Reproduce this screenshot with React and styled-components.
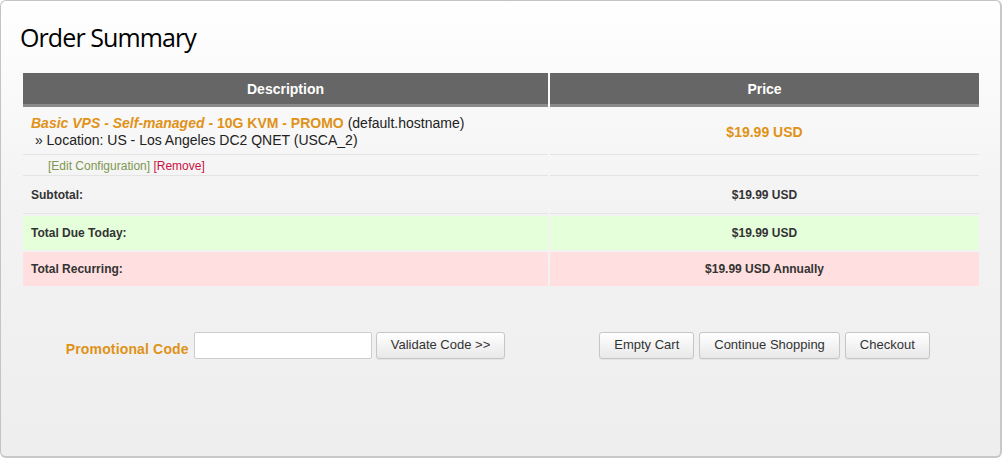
import React from 'react';
import styled, { createGlobalStyle } from 'styled-components';

const GlobalStyle = createGlobalStyle`
    html, body {
        margin: 0;
        padding: 0;
        background: #ffffff;
    }
    body {
        font-family: "Liberation Sans", Arial, sans-serif;
        color: #333;
    }
`

const ORANGE = '#e09218';

const App = () => {
    return (
        <>
            <GlobalStyle />
            <Panel>
                <Title>Order Summary</Title>

                <Table>
                    <thead>
                        <tr>
                            <Th style={{ width: '525px' }}>Description</Th>
                            <Th>Price</Th>
                        </tr>
                    </thead>
                    <tbody>
                        <tr>
                            <ProductCell>
                                <ProductName>
                                    <em>Basic VPS - Self-managed</em> - 10G KVM - PROMO
                                </ProductName>{' '}
                                (default.hostname)
                                <br />
                                &nbsp;» Location: US - Los Angeles DC2 QNET (USCA_2)
                            </ProductCell>
                            <PriceCell>$19.99 USD</PriceCell>
                        </tr>
                        <tr>
                            <ActionsCell>
                                <EditLink href="#">[Edit Configuration]</EditLink>{' '}
                                <RemoveLink href="#">[Remove]</RemoveLink>
                            </ActionsCell>
                            <ActionsCell />
                        </tr>
                        <tr>
                            <SummaryLabel>Subtotal:</SummaryLabel>
                            <SummaryValue>$19.99 USD</SummaryValue>
                        </tr>
                        <tr>
                            <SummaryLabel $tone="green">Total Due Today:</SummaryLabel>
                            <SummaryValue $tone="green">$19.99 USD</SummaryValue>
                        </tr>
                        <tr>
                            <SummaryLabel $tone="red">Total Recurring:</SummaryLabel>
                            <SummaryValue $tone="red">$19.99 USD Annually</SummaryValue>
                        </tr>
                    </tbody>
                </Table>

                <Footer>
                    <FooterGroup>
                        <PromoLabel>Promotional Code</PromoLabel>
                        <PromoInput type="text" />
                        <Button>Validate Code &gt;&gt;</Button>
                    </FooterGroup>
                    <FooterGroup>
                        <Button>Empty Cart</Button>
                        <Button>Continue Shopping</Button>
                        <Button>Checkout</Button>
                    </FooterGroup>
                </Footer>
            </Panel>
        </>
    );
}

export default App;


const Panel = styled.div`
    box-sizing: border-box;
    width: 1002px;
    height: 458px;
    border: 1px solid #c4c4c4;
    border-right: 2px solid #c8c8c8;
    border-bottom: 2px solid #c8c8c8;
    border-radius: 6px;
    background: linear-gradient(to bottom, #ffffff 0px, #f3f3f3 200px, #eeeeee 458px);
    padding: 18px 19px 0 20px;
`

const Title = styled.h1`
    margin: 0 0 0 -1px;
    font-family: "Open Sans", "Noto Sans", sans-serif;
    font-weight: 400;
    font-size: 25px;
    line-height: 36px;
    color: #000;
    letter-spacing: -0.9px;
`

const Table = styled.table`
    width: 960px;
    margin-top: 16px;
    border-collapse: separate;
    border-spacing: 2px;
    font-size: 14px;
`

const Th = styled.th`
    background: #666666;
    border-bottom: 3px solid #8a8a8a;
    color: #ffffff;
    font-weight: bold;
    font-size: 14px;
    height: 31px;
    padding: 0;
    text-align: center;
`

const ProductCell = styled.td`
    padding: 6px 8px 5px 8px;
    line-height: 17px;
    border-bottom: 1px solid #e4e4e4;
    color: #222;
`

const ProductName = styled.strong`
    color: ${ORANGE};
    em {
        font-style: italic;
    }
`

const PriceCell = styled.td`
    text-align: center;
    font-weight: bold;
    color: ${ORANGE};
    border-bottom: 1px solid #e4e4e4;
`

const ActionsCell = styled.td`
    padding: 2px 0 1px 25px;
    font-size: 12px;
    line-height: 15px;
    border-bottom: 1px solid #e4e4e4;
`

const EditLink = styled.a`
    color: #7f9550;
    text-decoration: none;
`

const RemoveLink = styled.a`
    color: #cc1144;
    text-decoration: none;
`

const tones = {
    green: '#e6ffdb',
    red: '#ffdfdf',
};

const SummaryLabel = styled.td`
    padding: ${(p) => (p.$tone ? '10px 8px 9px 8px' : '10px 8px 10px 8px')};
    font-size: 12px;
    line-height: 15px;
    font-weight: bold;
    color: #333;
    background: ${(p) => tones[p.$tone] || 'transparent'};
    border-bottom: ${(p) => (p.$tone ? 'none' : '1px solid #e4e4e4')};
`

const SummaryValue = styled(SummaryLabel)`
    text-align: center;
`

const Footer = styled.div`
    display: grid;
    grid-template-columns: 525px 429px;
    column-gap: 2px;
    padding: 0 2px;
    margin-top: 44px;
`

const FooterGroup = styled.div`
    display: flex;
    justify-content: center;
    align-items: center;
    gap: 5px;
`

const PromoLabel = styled.span`
    color: ${ORANGE};
    font-weight: bold;
    font-size: 14px;
    margin-top: 7px;
    letter-spacing: 0.15px;
`

const PromoInput = styled.input`
    box-sizing: border-box;
    width: 178px;
    height: 27px;
    border: 1px solid #cccccc;
    border-radius: 2px;
    background: #ffffff;
    margin-right: -1px;
`

const Button = styled.button`
    box-sizing: border-box;
    height: 27px;
    padding: 0 14px 2px 14px;
    font-family: "Liberation Sans", Arial, sans-serif;
    font-size: 13px;
    color: #333;
    border: 1px solid #c6c6c6;
    border-radius: 3px;
    background: linear-gradient(to bottom, #ffffff, #e8e8e8);
    box-shadow: 0 1px 1px rgba(0, 0, 0, 0.06);
`
